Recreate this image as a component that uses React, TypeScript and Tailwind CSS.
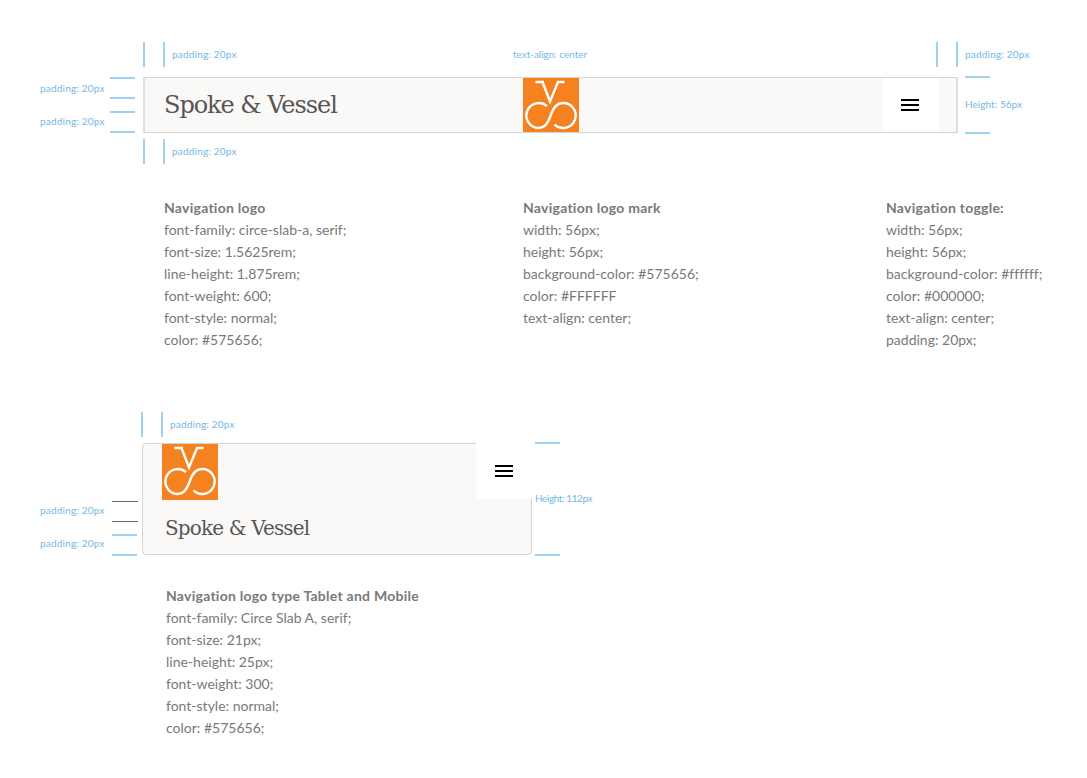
import React from "react";

const slab = "font-['DejaVu_Serif',serif]";

function Mark({ className }: { className: string }) {
  return (
    <div className={"w-14 bg-[#f58220] shrink-0 " + className}>
      <svg viewBox="0 0 56 56" width="56" height="56" fill="none" stroke="#fff" strokeWidth="2.4">
        <path d="M12.5 4H21M34 4H41.5M19.5 4L27 23.5L35 4" />
        <path d="M24 28A12.5 12.5 0 1 0 15.5 50C22 50 25 45 27.7 37.5C30 30 34 25 40 25A12.5 12.5 0 1 1 31.5 46.5" />
      </svg>
    </div>
  );
}

function Burger() {
  return (
    <div className="flex flex-col gap-[3px] w-[18px]">
      <div className="h-[2px] bg-black" />
      <div className="h-[2px] bg-black" />
      <div className="h-[2px] bg-black" />
    </div>
  );
}

function Spec({ title, lines, className }: { title: string; lines: string[]; className: string }) {
  return (
    <div className={"text-[14px] leading-[22px] text-[#797979] [font-variant-ligatures:none] " + className}>
      <div className="font-bold tracking-[0.25px]">{title}</div>
      {lines.map((l) => (
        <div key={l}>{l}</div>
      ))}
    </div>
  );
}

function Label({ children, className = "tracking-[0.2px]" }: { children: React.ReactNode; className?: string }) {
  return <div className={"text-[10px] leading-[12px] text-[#74b8e6] whitespace-nowrap [font-variant-ligatures:none] " + className}>{children}</div>;
}

function Tick({ className = "" }: { className?: string }) {
  return <div className={"w-[2px] h-[25px] bg-[#9fd0ef] shrink-0 " + className} />;
}

function Rule({ className = "bg-[#9fd0ef] h-[2px]" }: { className?: string }) {
  return <div className={"w-[25px] shrink-0 " + className} />;
}

function TickPair() {
  return (
    <>
      <Tick />
      <Tick className="ml-[18px]" />
    </>
  );
}

export default function App() {
  return (
    <div className="w-[1087px] h-[778px] overflow-hidden bg-white font-['Lato',sans-serif]">
      <div className="pt-[42px] pl-[143px] flex">
        <TickPair />
        <Label className="ml-[7px] mt-[6px] w-[341px] tracking-[0.2px]">padding: 20px</Label>
        <Label className="mt-[6px] w-[423px] -tracking-[0.03px]">text-align: center</Label>
        <TickPair />
        <Label className="ml-[7px] mt-[6px] tracking-[0.2px]">padding: 20px</Label>
      </div>

      <div className="mt-[10px] flex h-14">
        <div className="w-[143px] shrink-0 flex pl-10">
          <div className="w-[70px] flex flex-col gap-[21px] pt-[5px]">
            <Label>padding: 20px</Label>
            <Label>padding: 20px</Label>
          </div>
          <div className="flex flex-col">
            <Rule />
            <Rule className="mt-[18px] bg-[#9fd0ef] h-[2px]" />
            <Rule className="mt-3 bg-[#9fd0ef] h-[2px]" />
            <Rule className="mt-[18px] bg-[#9fd0ef] h-[2px]" />
          </div>
        </div>
        <div className="w-[815px] shrink-0 border-y border-y-[#d5d4d2] border-x-2 border-x-[#e0dfdd] bg-[#faf9f7] flex items-stretch">
          <div className={"w-[378px] shrink-0 pl-[19px] text-[24px] leading-[55px] text-[#575656] tracking-[-1.05px] " + slab}>Spoke &amp; Vessel</div>
          <Mark className="h-[54px] overflow-hidden" />
          <div className="ml-[304px] w-14 bg-white flex items-center justify-center pr-[2px]">
            <Burger />
          </div>
        </div>
        <div className="ml-[7px] -mt-px h-[58px] flex flex-col justify-between">
          <Rule />
          <Label className="mb-[2px] tracking-[0.05px]">Height: 56px</Label>
          <Rule />
        </div>
      </div>

      <div className="mt-[6px] pl-[143px] flex">
        <TickPair />
        <Label className="ml-[7px] mt-[6px] tracking-[0.2px]">padding: 20px</Label>
      </div>

      <div className="flex mt-[33px] pl-[164px]">
        <Spec
          className="w-[359px]"
          title="Navigation logo"
          lines={["font-family: circe-slab-a, serif;", "font-size: 1.5625rem;", "line-height: 1.875rem;", "font-weight: 600;", "font-style: normal;", "color: #575656;"]}
        />
        <Spec
          className="w-[363px]"
          title="Navigation logo mark"
          lines={["width: 56px;", "height: 56px;", "background-color: #575656;", "color: #FFFFFF", "text-align: center;"]}
        />
        <Spec
          className="w-[180px]"
          title="Navigation toggle:"
          lines={["width: 56px;", "height: 56px;", "background-color: #ffffff;", "color: #000000;", "text-align: center;", "padding: 20px;"]}
        />
      </div>

      <div className="mt-[61px] pl-[141px] flex">
        <TickPair />
        <Label className="ml-[7px] mt-[6px] tracking-[0.2px]">padding: 20px</Label>
      </div>

      <div className="mt-[6px] flex h-[112px]">
        <div className="w-[142px] shrink-0 flex pl-10">
          <div className="w-[72px] flex flex-col gap-[21px] pt-[61px]">
            <Label>padding: 20px</Label>
            <Label>padding: 20px</Label>
          </div>
          <div className="flex flex-col pt-[58px]">
            <Rule className="w-[26px] h-px bg-[#6a6a6a]" />
            <Rule className="mt-[19px] w-[26px] h-px bg-[#6a6a6a]" />
            <Rule className="mt-3 bg-[#9fd0ef] h-[2px]" />
            <Rule className="mt-[18px] bg-[#9fd0ef] h-[2px]" />
          </div>
        </div>
        <div className="w-[390px] shrink-0 rounded border border-[#d5d4d2] bg-[#faf9f7] flex flex-col relative">
          <Mark className="h-14 ml-[19px]" />
          <div className={"pl-[22px] pt-4 text-[20px] leading-[25px] text-[#575656] tracking-[-0.85px] " + slab}>Spoke &amp; Vessel</div>
          <div className="absolute -top-px -right-px w-14 h-14 bg-white flex items-center justify-center">
            <Burger />
          </div>
        </div>
        <div className="ml-[3px] -mt-px h-[114px] flex flex-col justify-between">
          <Rule />
          <Label className="mb-[2px] -tracking-[0.4px]">Height: 112px</Label>
          <Rule />
        </div>
      </div>

      <Spec
        className="ml-[166px] mt-[30px]"
        title="Navigation logo type Tablet and Mobile"
        lines={["font-family: Circe Slab A, serif;", "font-size: 21px;", "line-height: 25px;", "font-weight: 300;", "font-style: normal;", "color: #575656;"]}
      />
    </div>
  );
}
